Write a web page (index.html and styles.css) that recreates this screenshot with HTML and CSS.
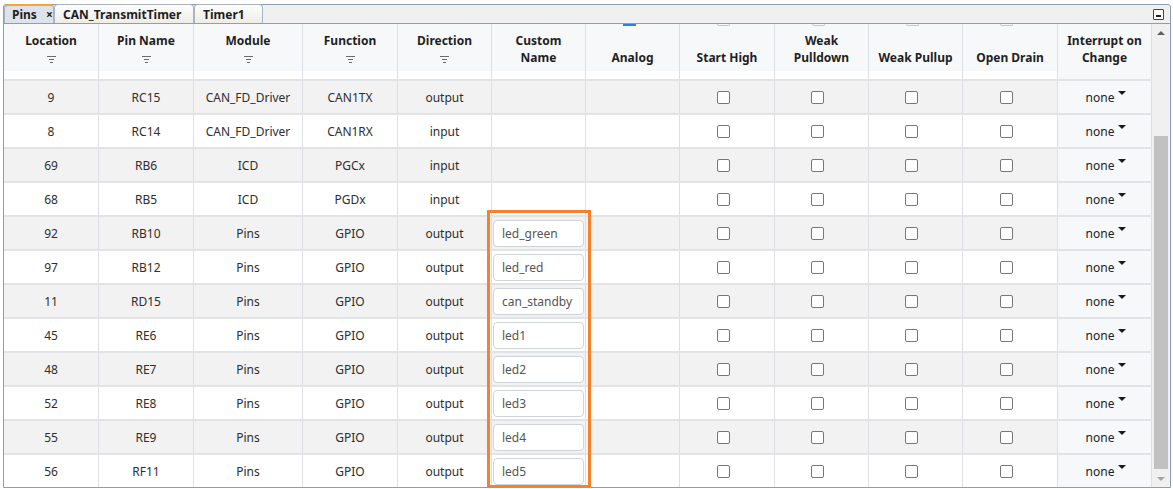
FILE: index.html
```html
<!DOCTYPE html>
<html>
<head>
<meta charset="utf-8">
<link rel="stylesheet" href="styles.css">
</head>
<body>
<div class="frame">
  <div class="tabbar">
    <div class="tab active tab-pins">Pins <span class="close">×</span></div>
    <div class="tab tab-can">CAN_TransmitTimer</div>
    <div class="tab tab-timer">Timer1</div>
    <div class="minimize"><span></span></div>
  </div>
  <div class="panel">
    <div class="grid">
      <div class="row head">
        <div class="hc"><span>Location</span><span class="filt"><svg width="9" height="7" viewBox="0 0 9 7"><rect x="0" y="0" width="9" height="1" fill="#6b6b6b"/><rect x="2" y="3" width="5" height="1" fill="#6b6b6b"/><rect x="3" y="6" width="3" height="1" fill="#6b6b6b"/></svg></span></div>
        <div class="hc"><span>Pin Name</span><span class="filt"><svg width="9" height="7" viewBox="0 0 9 7"><rect x="0" y="0" width="9" height="1" fill="#6b6b6b"/><rect x="2" y="3" width="5" height="1" fill="#6b6b6b"/><rect x="3" y="6" width="3" height="1" fill="#6b6b6b"/></svg></span></div>
        <div class="hc"><span>Module</span><span class="filt"><svg width="9" height="7" viewBox="0 0 9 7"><rect x="0" y="0" width="9" height="1" fill="#6b6b6b"/><rect x="2" y="3" width="5" height="1" fill="#6b6b6b"/><rect x="3" y="6" width="3" height="1" fill="#6b6b6b"/></svg></span></div>
        <div class="hc"><span>Function</span><span class="filt"><svg width="9" height="7" viewBox="0 0 9 7"><rect x="0" y="0" width="9" height="1" fill="#6b6b6b"/><rect x="2" y="3" width="5" height="1" fill="#6b6b6b"/><rect x="3" y="6" width="3" height="1" fill="#6b6b6b"/></svg></span></div>
        <div class="hc"><span>Direction</span><span class="filt"><svg width="9" height="7" viewBox="0 0 9 7"><rect x="0" y="0" width="9" height="1" fill="#6b6b6b"/><rect x="2" y="3" width="5" height="1" fill="#6b6b6b"/><rect x="3" y="6" width="3" height="1" fill="#6b6b6b"/></svg></span></div>
        <div class="hc"><span>Custom</span><span>Name</span></div>
        <div class="hc"><i class="peek blue"></i><span>Analog</span></div>
        <div class="hc"><i class="peek"></i><span>Start High</span></div>
        <div class="hc"><i class="peek"></i><span>Weak</span><span>Pulldown</span></div>
        <div class="hc"><i class="peek"></i><span>Weak Pullup</span></div>
        <div class="hc"><i class="peek"></i><span>Open Drain</span></div>
        <div class="hc"><span>Interrupt on</span><span>Change</span></div>
      </div>
      <div class="row spacer">
        <div></div><div></div><div></div><div></div><div></div><div></div><div></div><div></div><div></div><div></div><div></div><div class="ioc"></div>
      </div>

      <div class="row alt">
        <div>9</div><div>RC15</div><div>CAN_FD_Driver</div><div>CAN1TX</div><div>output</div><div></div><div></div>
        <div><i class="cb"></i></div><div><i class="cb"></i></div><div><i class="cb"></i></div><div><i class="cb"></i></div>
        <div class="ioc">none<i class="caret"></i></div>
      </div>
      <div class="row">
        <div>8</div><div>RC14</div><div>CAN_FD_Driver</div><div>CAN1RX</div><div>input</div><div></div><div></div>
        <div><i class="cb"></i></div><div><i class="cb"></i></div><div><i class="cb"></i></div><div><i class="cb"></i></div>
        <div class="ioc">none<i class="caret"></i></div>
      </div>
      <div class="row alt">
        <div>69</div><div>RB6</div><div>ICD</div><div>PGCx</div><div>input</div><div></div><div></div>
        <div><i class="cb"></i></div><div><i class="cb"></i></div><div><i class="cb"></i></div><div><i class="cb"></i></div>
        <div class="ioc">none<i class="caret"></i></div>
      </div>
      <div class="row">
        <div>68</div><div>RB5</div><div>ICD</div><div>PGDx</div><div>input</div><div></div><div></div>
        <div><i class="cb"></i></div><div><i class="cb"></i></div><div><i class="cb"></i></div><div><i class="cb"></i></div>
        <div class="ioc">none<i class="caret"></i></div>
      </div>
      <div class="row alt">
        <div>92</div><div>RB10</div><div>Pins</div><div>GPIO</div><div>output</div><div class="cn"><span class="field">led_green</span></div><div></div>
        <div><i class="cb"></i></div><div><i class="cb"></i></div><div><i class="cb"></i></div><div><i class="cb"></i></div>
        <div class="ioc">none<i class="caret"></i></div>
      </div>
      <div class="row">
        <div>97</div><div>RB12</div><div>Pins</div><div>GPIO</div><div>output</div><div class="cn"><span class="field">led_red</span></div><div></div>
        <div><i class="cb"></i></div><div><i class="cb"></i></div><div><i class="cb"></i></div><div><i class="cb"></i></div>
        <div class="ioc">none<i class="caret"></i></div>
      </div>
      <div class="row alt">
        <div>11</div><div>RD15</div><div>Pins</div><div>GPIO</div><div>output</div><div class="cn"><span class="field">can_standby</span></div><div></div>
        <div><i class="cb"></i></div><div><i class="cb"></i></div><div><i class="cb"></i></div><div><i class="cb"></i></div>
        <div class="ioc">none<i class="caret"></i></div>
      </div>
      <div class="row">
        <div>45</div><div>RE6</div><div>Pins</div><div>GPIO</div><div>output</div><div class="cn"><span class="field">led1</span></div><div></div>
        <div><i class="cb"></i></div><div><i class="cb"></i></div><div><i class="cb"></i></div><div><i class="cb"></i></div>
        <div class="ioc">none<i class="caret"></i></div>
      </div>
      <div class="row alt">
        <div>48</div><div>RE7</div><div>Pins</div><div>GPIO</div><div>output</div><div class="cn"><span class="field">led2</span></div><div></div>
        <div><i class="cb"></i></div><div><i class="cb"></i></div><div><i class="cb"></i></div><div><i class="cb"></i></div>
        <div class="ioc">none<i class="caret"></i></div>
      </div>
      <div class="row">
        <div>52</div><div>RE8</div><div>Pins</div><div>GPIO</div><div>output</div><div class="cn"><span class="field">led3</span></div><div></div>
        <div><i class="cb"></i></div><div><i class="cb"></i></div><div><i class="cb"></i></div><div><i class="cb"></i></div>
        <div class="ioc">none<i class="caret"></i></div>
      </div>
      <div class="row alt">
        <div>55</div><div>RE9</div><div>Pins</div><div>GPIO</div><div>output</div><div class="cn"><span class="field">led4</span></div><div></div>
        <div><i class="cb"></i></div><div><i class="cb"></i></div><div><i class="cb"></i></div><div><i class="cb"></i></div>
        <div class="ioc">none<i class="caret"></i></div>
      </div>
      <div class="row">
        <div>56</div><div>RF11</div><div>Pins</div><div>GPIO</div><div>output</div><div class="cn"><span class="field">led5</span></div><div></div>
        <div><i class="cb"></i></div><div><i class="cb"></i></div><div><i class="cb"></i></div><div><i class="cb"></i></div>
        <div class="ioc">none<i class="caret"></i></div>
      </div>
    </div>
    <div class="sb">
      <div class="sb-btn"><i class="tri-up"></i></div>
      <div class="sb-track"><div class="sb-thumb"></div></div>
      <div class="sb-btn"><i class="tri-down"></i></div>
    </div>
  </div>
  <div class="highlight"></div>
</div>
</body>
</html>
```
FILE: styles.css
```css
html, body {
  margin: 0;
  background: #ffffff;
}
body {
  font-family: "Noto Sans", "Open Sans", "Liberation Sans", sans-serif;
  font-size: 12px;
  color: #2e2e2e;
}
.frame {
  position: relative;
  margin: 4px 0 0 3px;
  width: 1168px;
  height: 484px;
  box-sizing: border-box;
  border: 1px solid #8d9db3;
  border-radius: 3px 3px 0 0;
  background: #f0f0f0;
}
.tabbar {
  display: flex;
  align-items: stretch;
  height: 19px;
  margin-top: -1px;
  border-bottom: 1px solid #8d9db3;
}
.tab {
  box-sizing: border-box;
  height: 19px;
  display: flex;
  align-items: center;
  padding: 0 0 0 8px;
  border: 1px solid #aab3c0;
  border-bottom: none;
  border-radius: 4px 4px 0 0;
  background: linear-gradient(#fefefe, #eeece5);
  font-weight: 700;
  color: #1e1e1e;
  white-space: nowrap;
}
.tab-pins { width: 50px; padding-left: 7px; }
.tab-can { width: 140px; }
.tab-timer { width: 69px; }
.tab.active {
  border-top: 2px solid #f4a63a;
  background: #dde3ed;
}
.close {
  margin-left: 9px;
  font-size: 12px;
}
.minimize {
  margin-left: auto;
  margin-right: 6px;
  align-self: center;
  width: 9px;
  height: 9px;
  border: 1px solid #444;
  border-radius: 1px;
  background: #fff;
  display: flex;
  align-items: flex-end;
  justify-content: center;
  margin-top: 1px;
}
.minimize span {
  width: 5px;
  height: 2px;
  margin-bottom: 2px;
  background: #222;
}
.panel {
  display: flex;
  height: 463px;
  overflow: hidden;
  background: #ffffff;
}
.grid {
  width: 1148px;
  flex: none;
}
.row {
  display: grid;
  grid-template-columns: 95px 95px 109px 95px 94px 94px 94px 95px 94px 94px 95px 94px;
  height: 34px;
  box-sizing: border-box;
  border-bottom: 2px solid #e1e3e7;
  background: #ffffff;
}
.row.alt { background: #f2f2f2; }
.row > div {
  border-right: 1px solid #dcdfe3;
  display: flex;
  align-items: center;
  justify-content: center;
  white-space: nowrap;
}
.row.head {
  height: 47px;
  border-bottom: none;
  background: #f7f8fa;
}
.row.head > .hc {
  position: relative;
  flex-direction: column;
  justify-content: flex-end;
  padding-bottom: 5px;
  line-height: 17px;
  font-weight: 700;
  color: #1f1f1f;
  text-align: center;
}
.filt {
  height: 17px;
  display: flex;
  align-items: center;
  justify-content: center;
  padding-top: 3px;
  box-sizing: border-box;
}
.peek {
  position: absolute;
  top: 0;
  left: calc(50% - 10px);
  width: 11px;
  height: 1px;
  border: 1px solid #c4c8ce;
  border-top: none;
  border-radius: 0 0 2px 2px;
}
.peek.blue {
  left: calc(50% - 10px);
  width: 13px;
  height: 2px;
  border: none;
  background: #2c7df0;
  border-radius: 0;
}
.row.spacer {
  height: 10px;
}
.ioc {
  background: #f7f8fa;
  color: #222;
}
.row > .ioc { padding-left: 3px; }
.caret {
  display: inline-block;
  width: 0;
  height: 0;
  border-left: 4px solid transparent;
  border-right: 4px solid transparent;
  border-top: 4px solid #1a1a1a;
  margin-left: 4px;
  position: relative;
  top: -4px;
}
.cb {
  display: block;
  width: 13px;
  height: 13px;
  box-sizing: border-box;
  border: 1px solid #777;
  border-radius: 2px;
  background: #fff;
  margin-right: 8px;
  margin-top: 1px;
}
.row > .cn {
  justify-content: flex-start;
  padding-left: 1px;
}
.field {
  display: flex;
  align-items: center;
  box-sizing: border-box;
  width: 91px;
  height: 27px;
  padding-left: 8px;
  border: 1px solid #cfd4da;
  border-radius: 4px;
  background: #fff;
  color: #555;
}
.sb {
  width: 18px;
  flex: none;
  background: #f0f0f0;
  display: flex;
  flex-direction: column;
}
.sb-btn {
  height: 17px;
  display: flex;
  align-items: center;
  justify-content: center;
  flex: none;
}
.tri-up {
  width: 0;
  height: 0;
  border-left: 4px solid transparent;
  border-right: 4px solid transparent;
  border-bottom: 4px solid #5f5f5f;
}
.tri-down {
  width: 0;
  height: 0;
  border-left: 4px solid transparent;
  border-right: 4px solid transparent;
  border-top: 4px solid #a3a3a3;
}
.sb-track {
  flex: 1;
  display: flex;
  flex-direction: column;
  justify-content: flex-end;
  align-items: center;
  padding-bottom: 1px;
}
.sb-thumb {
  width: 14px;
  height: 333px;
  background: #c1c1c1;
}
.highlight {
  position: absolute;
  left: 483px;
  top: 205px;
  width: 104px;
  height: 278px;
  box-sizing: border-box;
  border: 3px solid #f5822a;
  pointer-events: none;
}
```
